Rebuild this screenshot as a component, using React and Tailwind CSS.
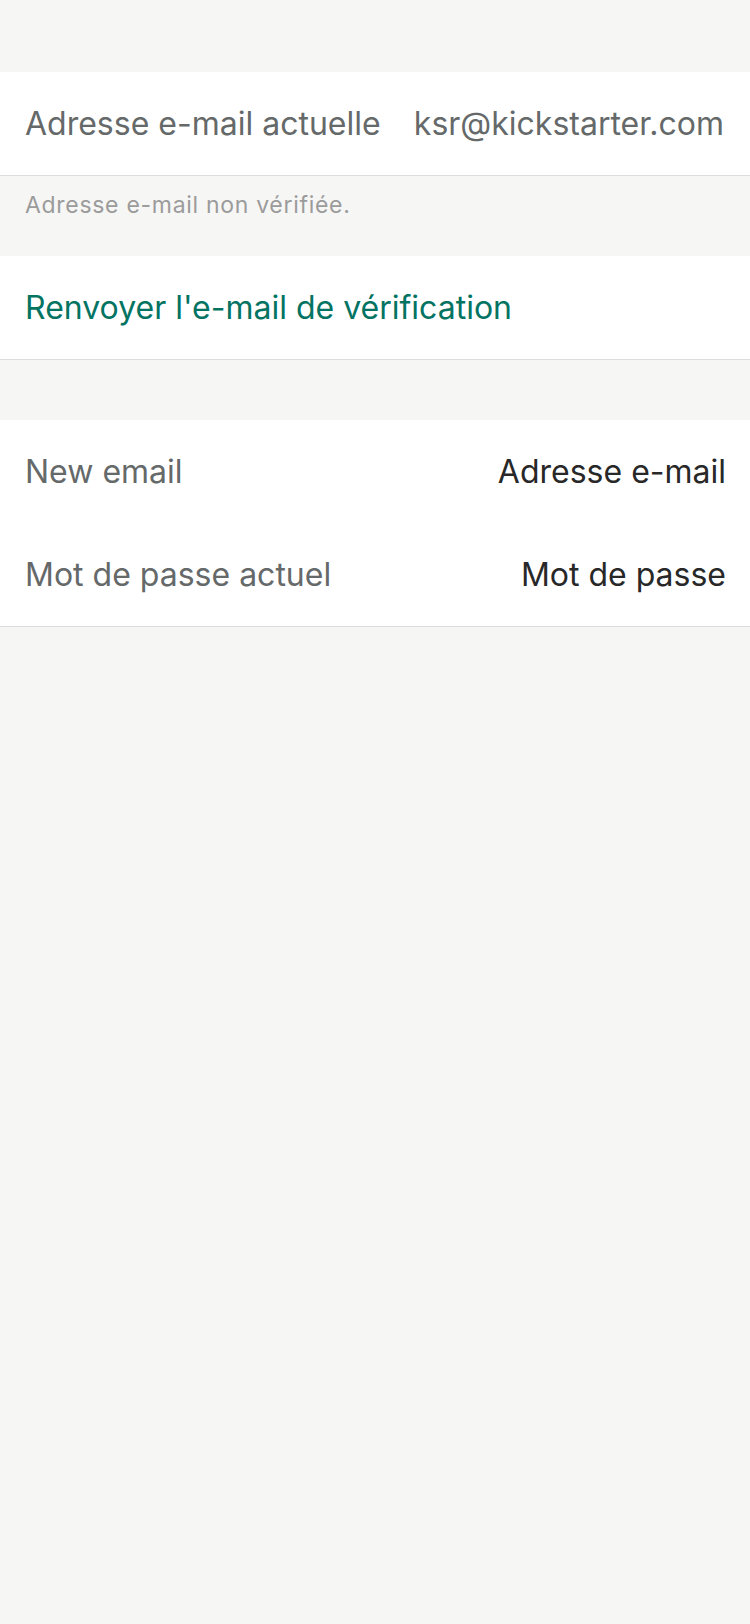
export default function App() {
  return (
    <div className="min-h-[1624px] w-[750px] bg-[#f6f6f5]" style={{ fontFamily: 'Inter, "Noto Sans", sans-serif' }}>
      <div className="h-[72px]" />
      <div className="bg-white border-b border-[#dcdcdc]">
        <div className="h-[103px] flex items-center justify-between pl-[25px] pr-[26px]">
          <span className="text-[32px] text-[#656969]">Adresse e-mail actuelle</span>
          <span className="text-[32px] text-[#656969]">ksr@kickstarter.com</span>
        </div>
      </div>
      <div className="h-[80px] pl-[25px] pt-[12px]">
        <span className="text-[23px] text-[#9b9b9b] tracking-[0.7px]">Adresse e-mail non vérifiée.</span>
      </div>
      <div className="bg-white border-b border-[#dcdcdc]">
        <div className="h-[103px] flex items-center pl-[25px]">
          <span className="text-[32px] text-[#037362]">Renvoyer l'e-mail de vérification</span>
        </div>
      </div>
      <div className="h-[60px]" />
      <div className="bg-white border-b border-[#dcdcdc]">
        <div className="h-[103px] flex items-center justify-between pl-[25px] pr-[24px]">
          <span className="text-[32px] text-[#656969]">New email</span>
          <span className="text-[32px] text-[#282828]">Adresse e-mail</span>
        </div>
        <div className="h-[103px] flex items-center justify-between pl-[25px] pr-[24px]">
          <span className="text-[32px] text-[#656969]">Mot de passe actuel</span>
          <span className="text-[32px] text-[#282828]">Mot de passe</span>
        </div>
      </div>
    </div>
  );
}
